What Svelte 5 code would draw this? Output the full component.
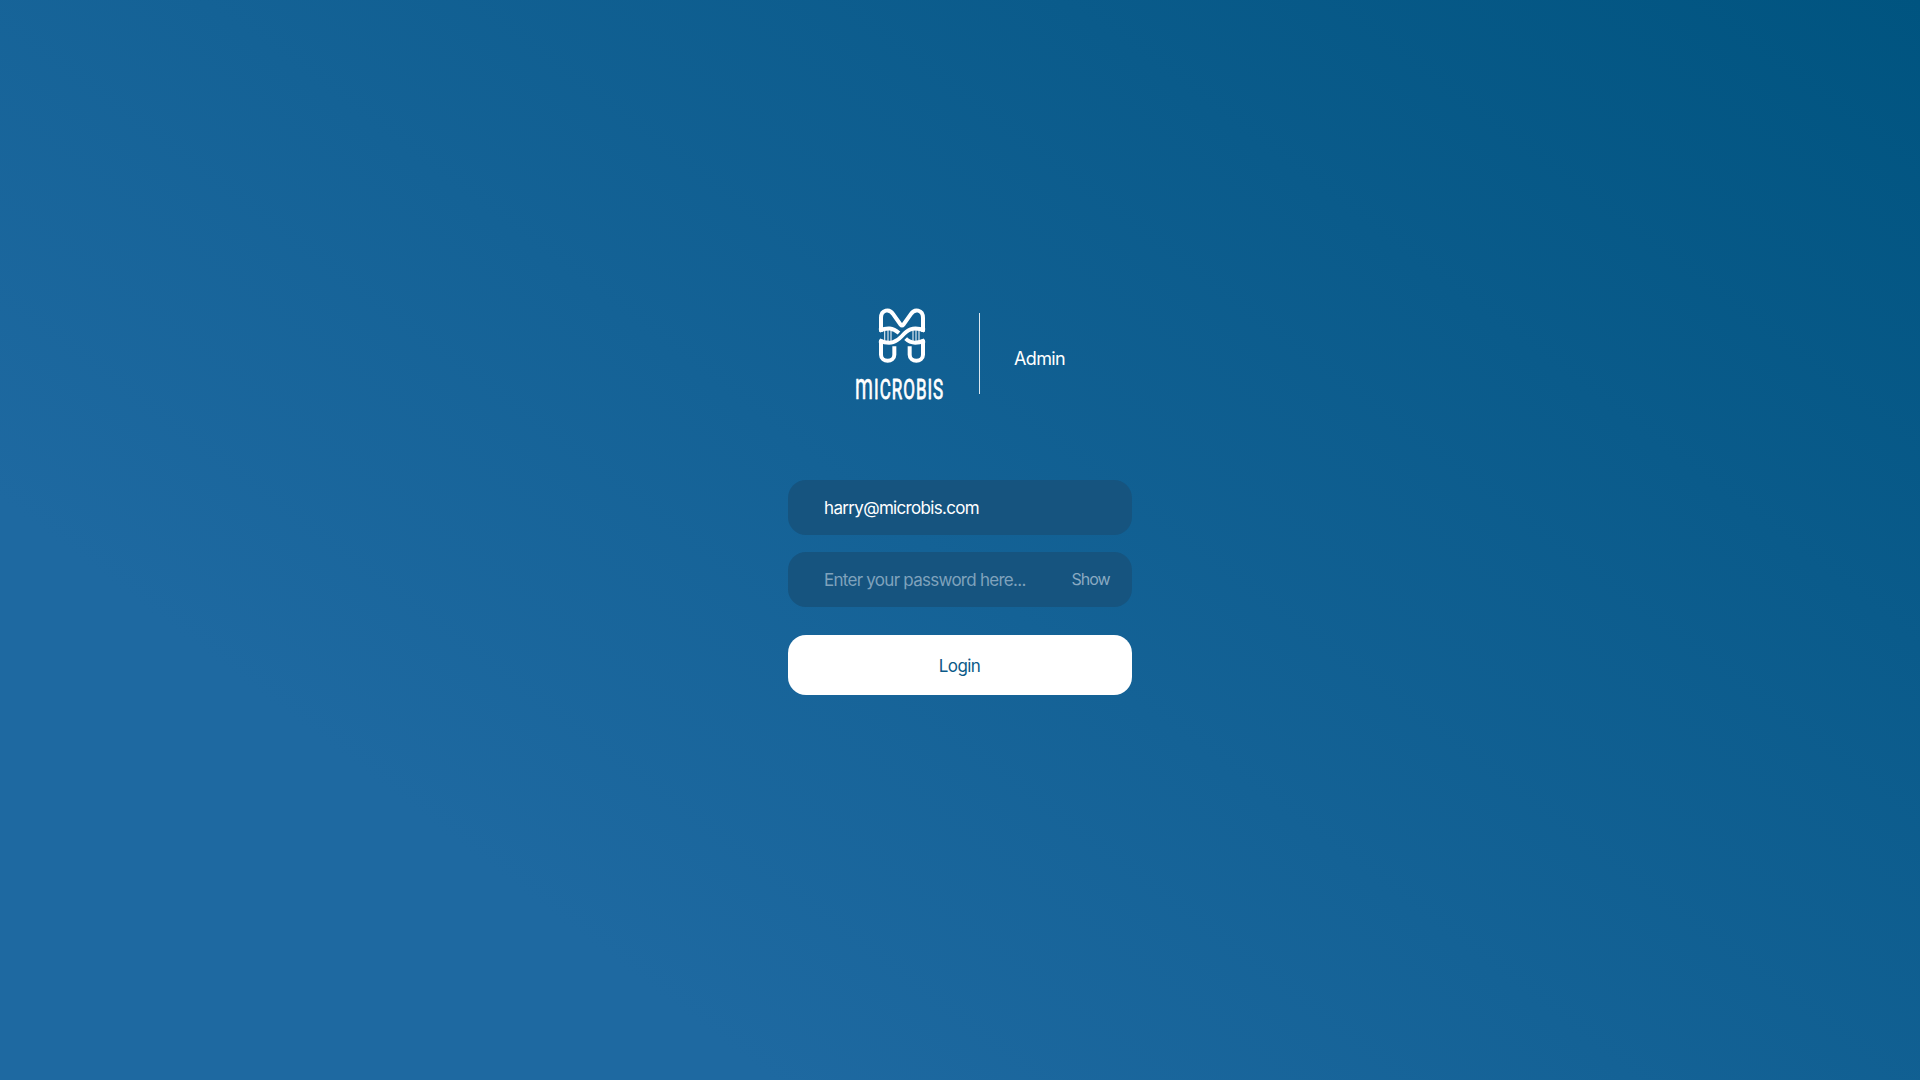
<script>
  let email = $state('harry@microbis.com');
  let password = $state('');
  let visible = $state(false);
</script>

<main>
  <header>
    <div class="brand">
      <svg class="mark" viewBox="1 -1 210 210" aria-hidden="true">
        <g fill="none" stroke="#fff" stroke-width="12">
          <path d="M49 94V53C49 27 75 24 85 41L108 73Q112 78 116 73L139 41C149 24 175 27 175 53V94" />
          <path d="M44 91C68 81 84 82 103 98" />
          <path d="M123 115C139 131 156 131 180 120" />
          <path d="M44 120C79 136 97 123 112 107S143 76 180 91" />
          <path d="M49 118V163C49 187 89 187 89 163V138" />
          <path d="M175 118V163C175 187 135 187 135 163V138" />
        </g>
        <path d="M60 88V125M70 88V127M79 90V125M145 90V125M154 88V127M163 88V125" stroke="#fff" stroke-width="3.6" opacity=".85" />
      </svg>
      <svg class="name" viewBox="0 -10 110 50">
        <g fill="#fff" stroke="#fff" stroke-linejoin="round" font-family="Roboto, sans-serif" font-size="27">
          <text transform="translate(10 29) scale(.76 1.36)" stroke-width=".4">m</text>
          <text transform="translate(29 29) scale(.63 1)" stroke-width=".8" letter-spacing="1.6">ICROBIS</text>
        </g>
      </svg>
    </div>
    <div class="divider"></div>
    <div class="role">Admin</div>
  </header>

  <form onsubmit={(e) => e.preventDefault()}>
    <label class="field"><input class="email" type="text" aria-label="Email" bind:value={email} /></label>
    <div class="field">
      <input type={visible ? 'text' : 'password'} aria-label="Password" placeholder="Enter your password here..." bind:value={password} />
      <button class="show" type="button" onclick={() => (visible = !visible)}>Show</button>
    </div>
    <button class="login" type="submit">Login</button>
  </form>
</main>

<style>
  :global(body) { margin: 0; }
  main {
    box-sizing: border-box;
    height: 100vh;
    padding-top: 300px;
    display: flex;
    flex-direction: column;
    align-items: center;
    overflow: hidden;
    background: linear-gradient(217deg, #005480 0%, #1e69a1 77%);
    font-family: Inter, sans-serif;
    color: #fff;
  }
  header { display: flex; width: 230px; height: 110px; }
  .brand { width: 110px; height: 110px; display: flex; flex-direction: column; align-items: center; }
  .mark { width: 70px; height: 70px; flex: none; }
  .name { width: 110px; height: 50px; margin-top: -10px; flex: none; overflow: visible; }
  .divider { width: 1px; height: 81px; margin: 13px 0 0 24px; background: #dbe7ef; }
  .role { margin: 48px 0 0 34px; font-size: 18px; line-height: 22px; letter-spacing: -0.65px; }
  form { width: 344px; margin-top: 70px; display: flex; flex-direction: column; gap: 17px; }
  .field {
    box-sizing: border-box;
    height: 55px;
    padding: 0 22px 0 36px;
    display: flex;
    align-items: center;
    border-radius: 18px;
    background: #16547f;
  }
  input {
    flex: 1;
    min-width: 0;
    height: 30px;
    padding: 0;
    border: 0;
    outline: 0;
    background: transparent;
    color: #fff;
    font: 17px Inter, sans-serif;
    letter-spacing: -0.67px;
  }
  input::placeholder { color: #7fa2bc; opacity: 1; letter-spacing: -0.73px; }
  button { padding: 0; border: 0; font-family: Inter, sans-serif; }
  .show { background: none; color: #8aaac2; font-size: 16px; letter-spacing: -1.05px; padding: 0 0.5px 1px 0; }
  .login {
    height: 60px;
    margin-top: 11px;
    padding: 2px 1px 0 0;
    border-radius: 18px;
    background: #fff;
    color: #0b5a88;
    font-size: 17px;
    letter-spacing: -0.6px;
  }
</style>
